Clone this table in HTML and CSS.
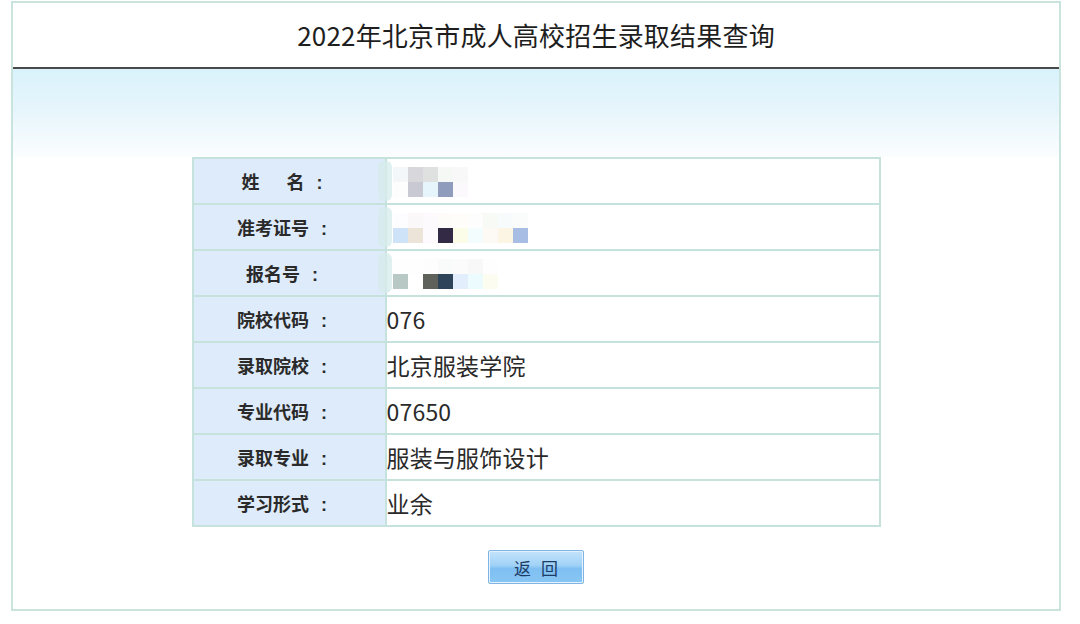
FILE: index.html
```html
<!DOCTYPE html>
<html lang="zh-CN">
<head>
<meta charset="utf-8">
<title>2022年北京市成人高校招生录取结果查询</title>
<link rel="stylesheet" href="styles.css">
</head>
<body>
<div class="frame">
  <div class="title">2022年北京市成人高校招生录取结果查询</div>
  <div class="band"></div>
  <table class="result">
    <tr>
      <th>姓<span class="gap"></span>名<span class="colon">:</span></th>
      <td>
        <div class="mosaic">
          <span class="haze"></span>
          <div class="grid">
            <i style="background:#f4f7fa"></i><i style="background:#d8d8dc"></i><i style="background:#dfe0e0"></i><i style="background:#f5f8f4"></i><i style="background:#f8f8f8"></i>
            <i style="background:#fcfdfc"></i><i style="background:#c8c9d2"></i><i style="background:#e6f4fc"></i><i style="background:#8f9cbb"></i><i style="background:#fbf9fc"></i>
          </div>
        </div>
      </td>
    </tr>
    <tr>
      <th>准考证号<span class="colon">:</span></th>
      <td>
        <div class="mosaic">
          <span class="haze"></span>
          <div class="grid wide">
            <i style="background:#fdfcfe"></i><i style="background:#faf8f8"></i><i style="background:#fdfafd"></i><i style="background:#fefcf8"></i><i style="background:#fefdf9"></i><i style="background:#fdfdfd"></i><i style="background:#f8faf6"></i><i style="background:#f7fbfb"></i><i style="background:#fafcfc"></i>
            <i style="background:#cfe3f8"></i><i style="background:#ece4d8"></i><i style="background:#fdfafd"></i><i style="background:#332a45"></i><i style="background:#fbfde8"></i><i style="background:#f4fdfe"></i><i style="background:#fdf9f4"></i><i style="background:#fdf5e4"></i><i style="background:#a8bde4"></i>
          </div>
        </div>
      </td>
    </tr>
    <tr>
      <th>报名号<span class="colon">:</span></th>
      <td>
        <div class="mosaic">
          <span class="haze"></span>
          <div class="grid mid">
            <i style="background:#fefefe"></i><i style="background:#fefefe"></i><i style="background:#fdfdfd"></i><i style="background:#f9fafa"></i><i style="background:#fbfbfb"></i><i style="background:#f8f8f8"></i><i style="background:#fefefe"></i>
            <i style="background:#b8c8c4"></i><i style="background:#ffffff"></i><i style="background:#5f625a"></i><i style="background:#2e4458"></i><i style="background:#e2eefc"></i><i style="background:#ecfcfe"></i><i style="background:#fcfdf0"></i>
          </div>
        </div>
      </td>
    </tr>
    <tr><th>院校代码<span class="colon">:</span></th><td class="val">076</td></tr>
    <tr><th>录取院校<span class="colon">:</span></th><td class="val">北京服装学院</td></tr>
    <tr><th>专业代码<span class="colon">:</span></th><td class="val">07650</td></tr>
    <tr><th>录取专业<span class="colon">:</span></th><td class="val">服装与服饰设计</td></tr>
    <tr><th>学习形式<span class="colon">:</span></th><td class="val">业余</td></tr>
  </table>
  <div class="actions">
    <button class="back" type="button">返 回</button>
  </div>
</div>
</body>
</html>
```

FILE: styles.css
```css
html, body {
  margin: 0;
  padding: 0;
  background: #ffffff;
}

body {
  font-family: "Noto Sans CJK SC", "Noto Sans", sans-serif;
  color: #222222;
}

.frame {
  box-sizing: border-box;
  width: 1050px;
  height: 610px;
  margin: 1px 0 0 11px;
  border: 2px solid #c8e4dc;
  display: flex;
  flex-direction: column;
  align-items: center;
}

.title {
  align-self: stretch;
  box-sizing: border-box;
  height: 66px;
  border-bottom: 2px solid #4a4a4a;
  display: flex;
  align-items: center;
  justify-content: center;
  font-size: 26px;
  color: #1e1e1e;
  letter-spacing: 0.2px;
  padding-bottom: 2px;
}

.band {
  align-self: stretch;
  height: 88px;
  background: linear-gradient(to bottom, #d9f2fb 0%, #e6f5fc 45%, #fbfdfe 100%);
}

.result {
  border-collapse: collapse;
  width: 689px;
  margin-top: 0;
  border: 2px solid #c6e2dc;
}

.result th,
.result td {
  border: 2px solid #c6e2dc;
  height: 46px;
  padding: 0;
  box-sizing: border-box;
}

.result th {
  width: 193px;
  background: #deebfa;
  font-size: 18px;
  font-weight: 700;
  color: #2a2a2a;
  text-align: center;
  padding-right: 14px;
  white-space: nowrap;
}

.colon {
  margin-left: 12px;
  font-family: "Liberation Sans", sans-serif;
  font-weight: 700;
}

.gap {
  display: inline-block;
  width: 27px;
}

.result td {
  background: #ffffff;
}

.val {
  font-size: 23px;
  color: #2a2a2a;
  padding-left: 0;
  letter-spacing: 0.2px;
}

.mosaic {
  display: flex;
  align-items: center;
  height: 42px;
}

.haze {
  display: block;
  width: 14px;
  height: 40px;
  margin-left: -9px;
  background: #d6ecec;
  border-radius: 6px;
  opacity: 0.8;
}

.grid {
  display: grid;
  grid-template-columns: repeat(5, 15px);
  grid-auto-rows: 15px;
  margin-left: 1px;
  margin-top: 1px;
}

.grid.wide {
  grid-template-columns: repeat(9, 15px);
}

.grid.mid {
  grid-template-columns: repeat(7, 15px);
}

.grid i {
  display: block;
  width: 15px;
  height: 15px;
}

.actions {
  display: flex;
  justify-content: center;
  margin-top: 23px;
}

.back {
  box-sizing: border-box;
  width: 96px;
  height: 34px;
  border: 1px solid #7fb4e4;
  border-radius: 2px;
  box-shadow: inset 0 0 0 1px #e4f2fd;
  background: linear-gradient(to bottom, #c4e3fb 0%, #a0d2f7 45%, #7fbff2 55%, #88c6f4 100%);
  font-family: "Noto Sans CJK SC", sans-serif;
  font-size: 17px;
  color: #1c3c66;
  letter-spacing: 3px;
  padding: 0 0 0 3px;
  cursor: pointer;
}
```
